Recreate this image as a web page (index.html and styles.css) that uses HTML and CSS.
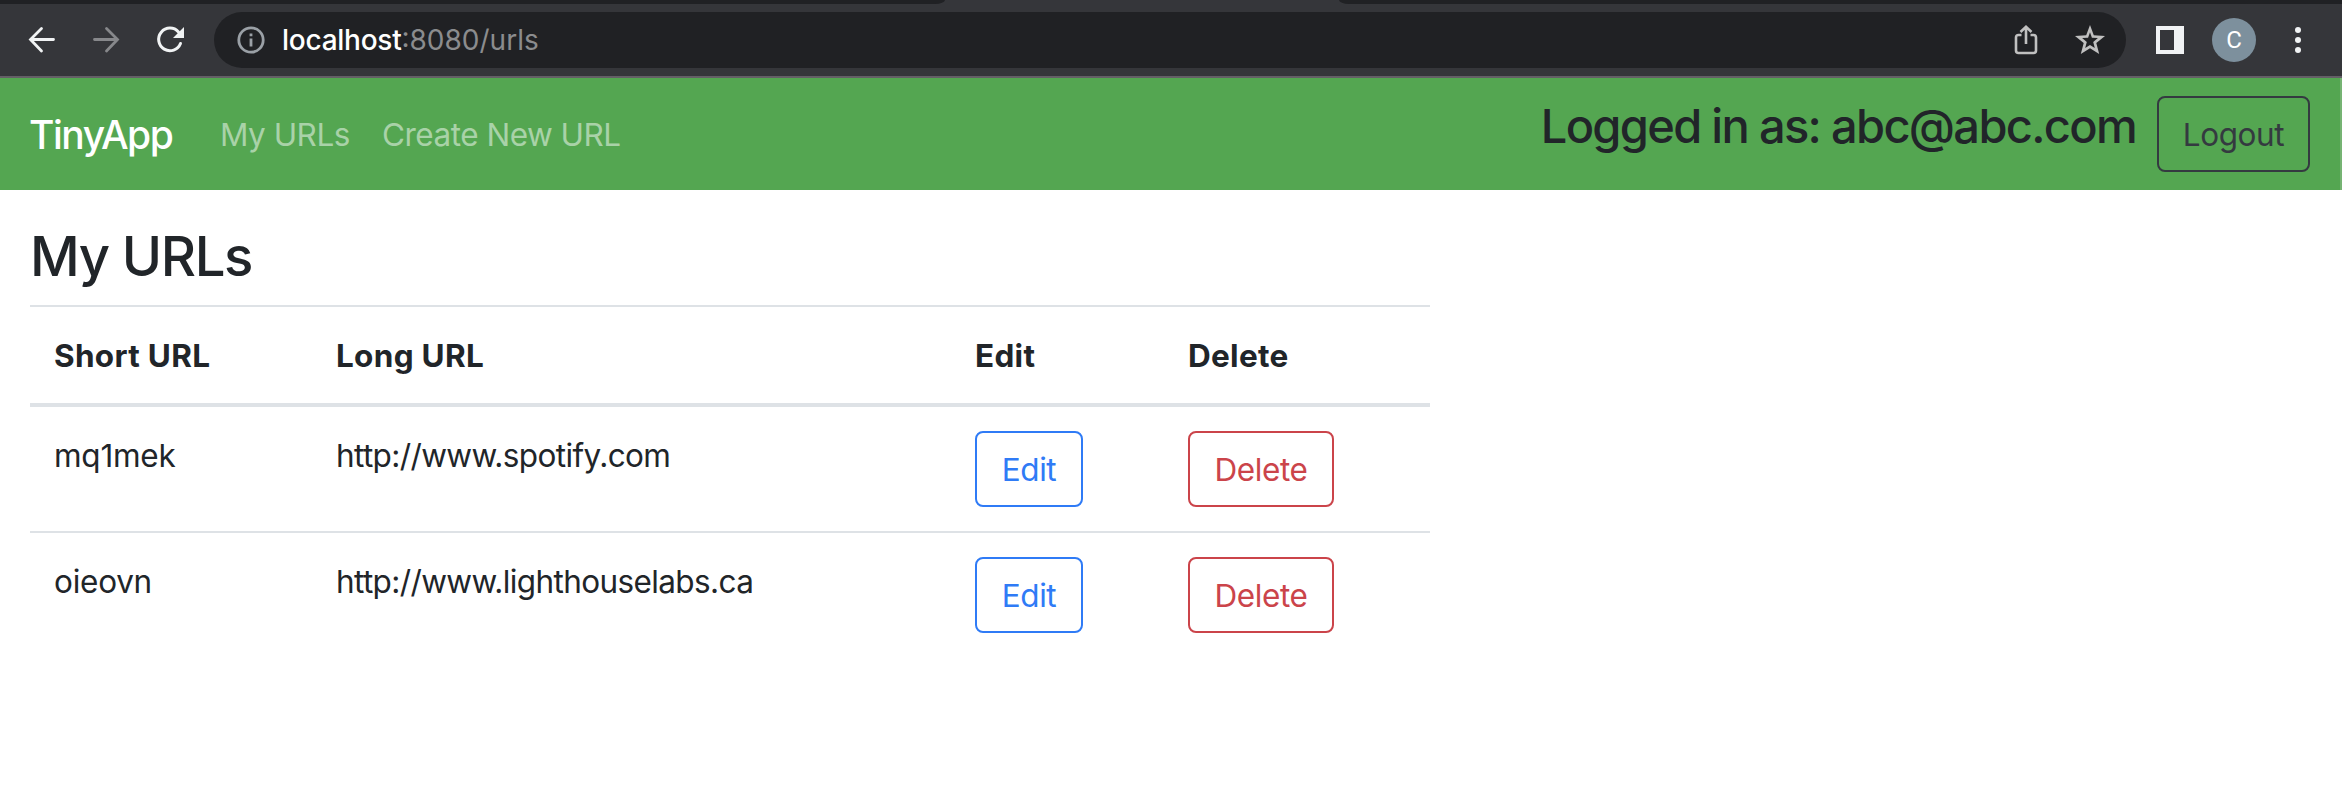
FILE: index.html
```html
<!DOCTYPE html>
<html lang="en">
<head>
<meta charset="utf-8">
<title>TinyApp</title>
<link rel="stylesheet" href="styles.css">
</head>
<body>
<header class="browser">
  <div class="tabstrip"><span class="tab-left"></span><span class="tab-active"></span><span class="tab-right"></span></div>
  <div class="toolbar">
    <div class="nav-icons">
      <svg width="28" height="28" viewBox="0 0 28 28" fill="none" stroke="#f1f3f4" stroke-width="2.8" stroke-linecap="round"><path d="M25.500 13.500H3M13.500 2.500 2.500 13.500l11 11.500"/></svg>
      <svg width="28" height="28" viewBox="0 0 28 28" fill="none" stroke="#87888b" stroke-width="2.8" stroke-linecap="round"><path d="M2.500 13.500H25M14.500 2.500l11 11-11 11.500"/></svg>
      <svg width="28" height="28" viewBox="0 0 28 28" fill="none"><path d="M24.500 17.500A11.300 11.300 0 1 1 22.500 6" stroke="#f1f3f4" stroke-width="3" stroke-linecap="round"/><path d="M28 1v11H17z" fill="#f1f3f4"/></svg>
    </div>
    <div class="omnibox">
      <svg width="28" height="28" viewBox="0 0 28 28" fill="none" stroke="#9aa0a6" stroke-width="2.800"><circle cx="14" cy="14" r="12.200"/><path d="M14 12.500v8M14 7.500v2.700"/></svg>
      <span class="address"><span class="host">localhost</span><span class="path">:8080/urls</span></span>
      <svg class="share" width="24" height="30" viewBox="0 0 24 30" fill="none" stroke="#c0c0c0" stroke-width="2.600"><path d="M7.500 10H4.500Q2 10 2 12.500v13Q2 28 4.500 28h15q2.500 0 2.500-2.500v-13q0-2.500-2.500-2.500H16.500M12 19V2M6.500 7 12 1.800 17.500 7"/></svg>
      <svg class="star" width="30" height="30" viewBox="0 0 30 30"><path fill="#c0c0c0" fill-rule="evenodd" d="m15 0 3.800 10.200L30 11l-8.700 7.100L24.200 29 15 23.200 5.800 29l2.900-10.900L0 11l11.200-.8zM15 7.200l-1.900 5.500-6 .4 4.700 3.900-1.600 6 4.800-3.100 4.800 3.100-1.600-6 4.700-3.900-6-.4z"/></svg>
    </div>
    <svg class="panel" width="28" height="28" viewBox="0 0 28 28"><path fill="#f1f3f4" fill-rule="evenodd" d="M0 0h28v28H0zM4 4v20h14V4z"/></svg>
    <span class="avatar">C</span>
    <svg class="menu" width="6" height="26" viewBox="0 0 6 26" fill="#f1f3f4"><circle cx="3" cy="3" r="3"/><circle cx="3" cy="13" r="3"/><circle cx="3" cy="23" r="3"/></svg>
  </div>
</header>
<nav class="navbar">
  <a class="brand">TinyApp</a>
  <a class="nav-link first">My URLs</a>
  <a class="nav-link second">Create New URL</a>
  <h4 class="user">Logged in as: abc@abc.com</h4>
  <button class="btn btn-dark">Logout</button>
</nav>
<main class="content">
  <h3 class="title">My URLs</h3>
  <table class="urls">
    <colgroup><col class="c-short"><col class="c-long"><col class="c-edit"><col class="c-delete"></colgroup>
    <thead><tr><th>Short URL</th><th>Long URL</th><th>Edit</th><th>Delete</th></tr></thead>
    <tbody>
      <tr><td class="id">mq1mek</td><td>http://www.spotify.com</td><td><button class="btn btn-edit">Edit</button></td><td><button class="btn btn-delete">Delete</button></td></tr>
      <tr><td class="id">oieovn</td><td>http://www.lighthouselabs.ca</td><td><button class="btn btn-edit">Edit</button></td><td><button class="btn btn-delete">Delete</button></td></tr>
    </tbody>
  </table>
</main>
</body>
</html>
```
FILE: styles.css
```css
* { box-sizing: border-box; }
body { margin: 0; height: 800px; overflow: hidden; background: #fff; color: #212529; font: 31.5px/48px Inter, "Liberation Sans", sans-serif; letter-spacing: -0.62px; }
svg { display: block; flex: none; }
.browser { height: 78px; background: #35363a; border-bottom: 2px solid #645f66; }
.tabstrip { display: flex; height: 4px; background: #35363a; }
.tab-left { width: 945px; background: #202124; border-bottom-right-radius: 10px 4px; }
.tab-active { width: 394px; }
.tab-right { flex: 1; background: #202124; border-bottom-left-radius: 10px 4px; }
.toolbar { display: flex; align-items: center; height: 72px; padding: 0 39px 0 28px; }
.nav-icons { display: flex; gap: 36px; width: 186px; }
.omnibox { display: flex; align-items: center; width: 1912px; height: 56px; padding: 0 21px 0 23px; border-radius: 28px; background: #202124; }
.address { flex: 1; margin-left: 17px; font: 28px/56px Inter, sans-serif; letter-spacing: -0.25px; white-space: nowrap; }
.host { color: #fff; font-weight: 450; }
.path { color: #8b8c8e; letter-spacing: 0; }
.star { margin-left: 37px; }
.panel { margin-left: 30px; }
.avatar { width: 44px; height: 44px; margin-left: 28px; border-radius: 50%; background: #7d909d; color: #fff; font: 24px/44px Roboto, sans-serif; text-align: center; letter-spacing: 0; }
.menu { margin-left: 39px; }
.navbar { display: flex; align-items: center; height: 112px; padding: 0 30px 0 29px; background: #54a651; border-right: 2px solid #76b373; }
.brand { width: 191px; color: #fff; font-size: 39px; font-weight: 450; letter-spacing: -1.5px; padding-top: 2px; }
.nav-link { padding-top: 2px; color: #a9d2a8; letter-spacing: -0.5px; }
.first { width: 162px; }
.user { margin: -16px 21px 0 auto; font-size: 47px; line-height: 58px; font-weight: 500; letter-spacing: -1.68px; white-space: nowrap; }
.btn { display: block; height: 76px; padding: 2px 0 0; border: 2px solid; border-radius: 8px; background: transparent; font: inherit; letter-spacing: -0.4px; }
.btn-dark { width: 153px; color: #343a40; }
.btn-edit { width: 108px; color: #2f7bf6; }
.btn-delete { width: 146px; color: #cb444a; }
.content { padding: 33px 30px 0; }
.title { margin: 0 0 15px; font-size: 54.500px; line-height: 67px; font-weight: 500; letter-spacing: -1.4px; }
.urls { width: 1400px; table-layout: fixed; border-spacing: 0; }
.c-short { width: 282px; }
.c-long { width: 639px; }
.c-edit { width: 213px; }
.c-delete { width: 266px; }
th, td { height: 126px; padding: 25px 24px 23px; border-top: 2px solid #dee2e6; text-align: left; vertical-align: top; }
th { height: 102px; border-bottom: 4px solid #dee2e6; font-weight: 700; letter-spacing: 0.3px; }
td:has(.btn) { padding: 24px; }
.id { letter-spacing: -0.25px; }
tbody tr:first-child td { height: 124px; border-top: 0; }
```
